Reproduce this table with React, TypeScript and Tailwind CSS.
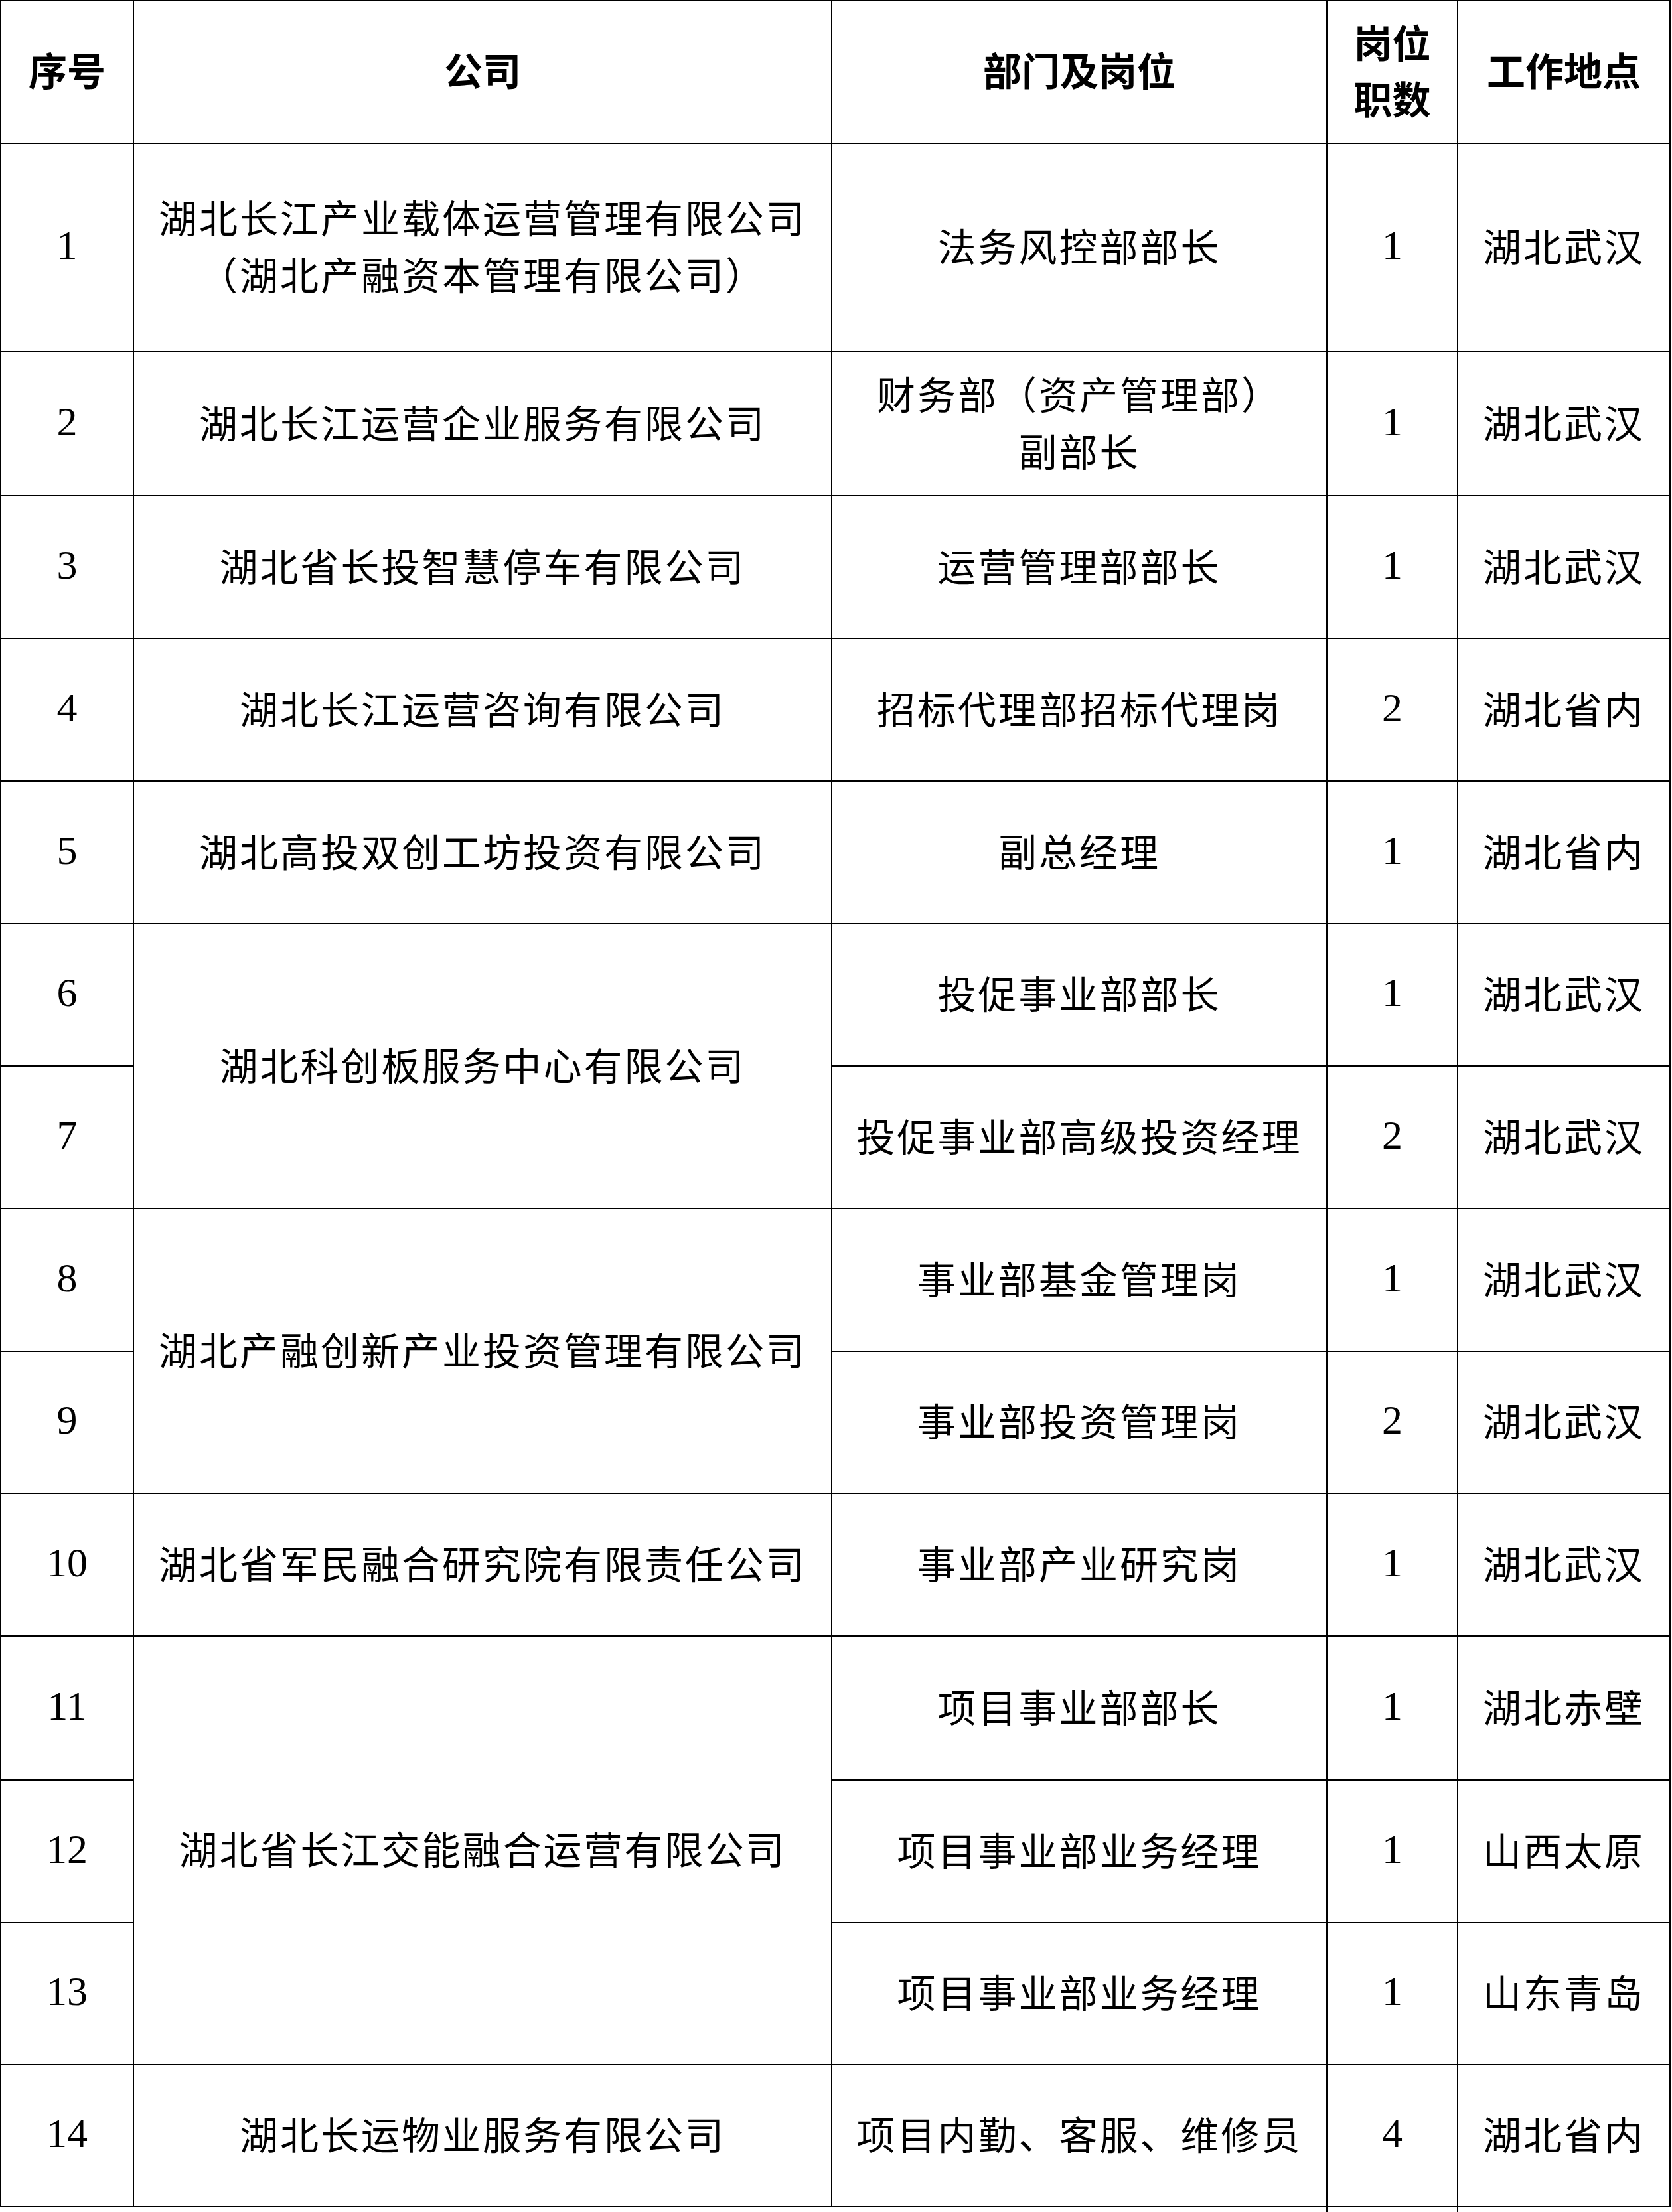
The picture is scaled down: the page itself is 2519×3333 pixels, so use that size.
import React from 'react';

interface Row {
  no: string;
  company?: string[];
  span?: 1 | 2 | 3;
  dept: string[];
  count: string;
  place: string;
}

// company === undefined means the cell above spans into this row
const ROWS: Row[] = [
  {
    no: '1',
    company: ['湖北长江产业载体运营管理有限公司', '（湖北产融资本管理有限公司）'],
    dept: ['法务风控部部长'],
    count: '1',
    place: '湖北武汉',
  },
  {
    no: '2',
    company: ['湖北长江运营企业服务有限公司'],
    dept: ['财务部（资产管理部）', '副部长'],
    count: '1',
    place: '湖北武汉',
  },
  { no: '3', company: ['湖北省长投智慧停车有限公司'], dept: ['运营管理部部长'], count: '1', place: '湖北武汉' },
  { no: '4', company: ['湖北长江运营咨询有限公司'], dept: ['招标代理部招标代理岗'], count: '2', place: '湖北省内' },
  { no: '5', company: ['湖北高投双创工坊投资有限公司'], dept: ['副总经理'], count: '1', place: '湖北省内' },
  { no: '6', company: ['湖北科创板服务中心有限公司'], span: 2, dept: ['投促事业部部长'], count: '1', place: '湖北武汉' },
  { no: '7', dept: ['投促事业部高级投资经理'], count: '2', place: '湖北武汉' },
  { no: '8', company: ['湖北产融创新产业投资管理有限公司'], span: 2, dept: ['事业部基金管理岗'], count: '1', place: '湖北武汉' },
  { no: '9', dept: ['事业部投资管理岗'], count: '2', place: '湖北武汉' },
  { no: '10', company: ['湖北省军民融合研究院有限责任公司'], dept: ['事业部产业研究岗'], count: '1', place: '湖北武汉' },
  { no: '11', company: ['湖北省长江交能融合运营有限公司'], span: 3, dept: ['项目事业部部长'], count: '1', place: '湖北赤壁' },
  { no: '12', dept: ['项目事业部业务经理'], count: '1', place: '山西太原' },
  { no: '13', dept: ['项目事业部业务经理'], count: '1', place: '山东青岛' },
  { no: '14', company: ['湖北长运物业服务有限公司'], dept: ['项目内勤、客服、维修员'], count: '4', place: '湖北省内' },
];

const SPAN_CLASS = {
  1: '',
  2: 'row-span-2',
  3: 'row-span-3',
} as const;

const CELL = 'flex flex-col items-center justify-center text-center pb-[8px] border-r-2 border-b-2 border-black';
const CJK = "font-['Noto_Sans_CJK_SC',sans-serif] text-[58px] leading-[86px] tracking-[3px] whitespace-nowrap";
const NUM = "font-['Liberation_Serif','Noto_Sans_CJK_SC',serif] text-[62px] leading-none";
const HEAD = "font-['Noto_Sans_CJK_SC',sans-serif] font-bold text-[58px] leading-[85px] whitespace-nowrap";

function Lines({ lines }: { lines: string[] }) {
  return (
    <>
      {lines.map((l, i) => (
        <span key={i} className="block">
          {l}
        </span>
      ))}
    </>
  );
}

export default function App() {
  return (
    <div className="w-[2519px] h-[3333px] bg-white text-black overflow-hidden">
      <div className="w-[2517px] border-l-2 border-t-2 border-black grid grid-cols-[200px_1052px_746px_197px_320px] grid-rows-[215px_314px_217px_215px_215px_215px_214px_215px_215px_214px_215px_217px_215px_214px_214px]">
        {/* header */}
        <div className={`${CELL} ${HEAD}`}>序号</div>
        <div className={`${CELL} ${HEAD}`}>公司</div>
        <div className={`${CELL} ${HEAD}`}>部门及岗位</div>
        <div className={`${CELL} ${HEAD}`}>
          <span className="block">岗位</span>
          <span className="block">职数</span>
        </div>
        <div className={`${CELL} ${HEAD}`}>工作地点</div>

        {ROWS.map((r) => (
          <React.Fragment key={r.no}>
            <div className={`${CELL} ${NUM}`}>{r.no}</div>
            {r.company && (
              <div className={`${CELL} ${CJK} ${SPAN_CLASS[r.span ?? 1]}`}>
                <Lines lines={r.company} />
              </div>
            )}
            <div className={`${CELL} ${CJK}`}>
              <Lines lines={r.dept} />
            </div>
            <div className={`${CELL} ${NUM}`}>{r.count}</div>
            <div className={`${CELL} ${CJK}`}>{r.place}</div>
          </React.Fragment>
        ))}
      </div>

      {/* start of the next row, cut off by the page edge */}
      <div className="w-[2517px] h-[7px] pl-[2px] grid grid-cols-[200px_1052px_746px_197px_320px]">
        <div />
        <div />
        <div className="border-r-2 border-black" />
        <div className="border-r-2 border-black" />
        <div />
      </div>
    </div>
  );
}
